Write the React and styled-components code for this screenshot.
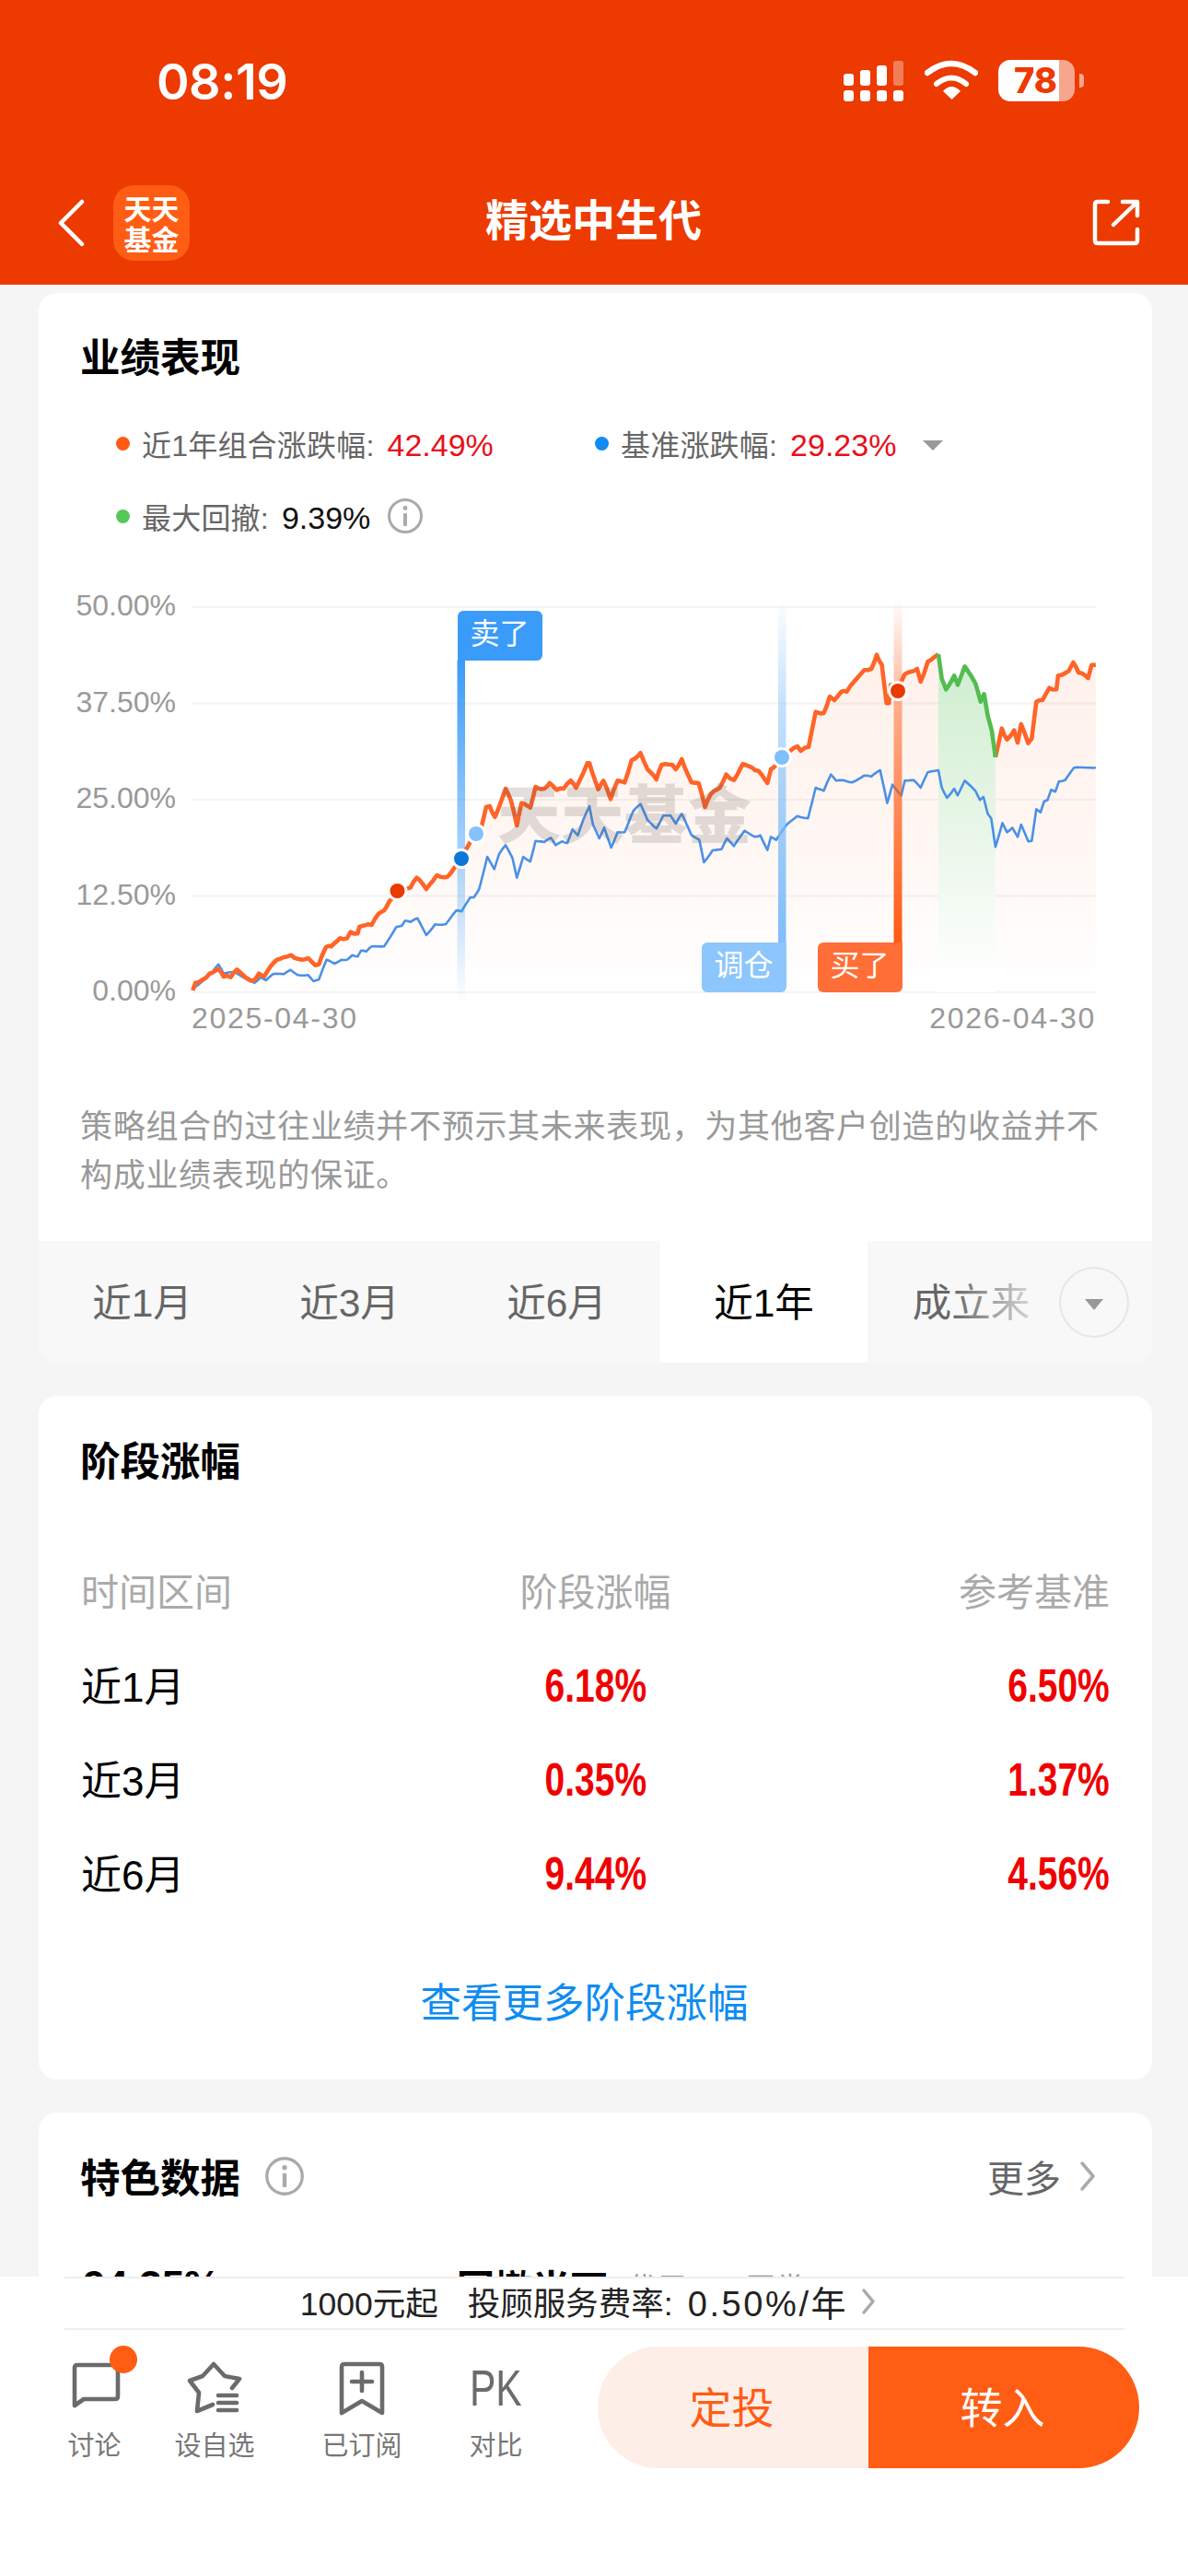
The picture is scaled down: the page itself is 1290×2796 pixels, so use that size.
import styled, { createGlobalStyle } from 'styled-components';

const GlobalStyle = createGlobalStyle`
  html, body {
    margin: 0;
    background: #fff;
  }
  * { box-sizing: border-box; }
  body {
    font-family: "Liberation Sans", "Noto Sans CJK SC", sans-serif;
  }
`;

const Page = styled.div`
  width: 1290px;
  height: 2796px;
  overflow: hidden;
  display: flex;
  flex-direction: column;
  background: #f5f5f5;
`;

/* header */
const Header = styled.header`
  height: 309px;
  flex: none;
  background: #ec3a00;
  padding-top: 58px;
  color: #fff;
`;

const StatusRow = styled.div`
  height: 60px;
  display: flex;
  align-items: center;
  padding-left: 170px;
`;

const Clock = styled.div`
  font-family: Inter, "Liberation Sans", sans-serif;
  font-weight: 600;
  font-size: 54px;
  letter-spacing: -0.5px;
  width: 746px;
`;

const Signal = styled.div`
  width: 65px;
  height: 48px;
  margin-top: -4px;
  display: grid;
  grid-template-columns: repeat(4, 11px);
  grid-template-rows: 31px 12px;
  column-gap: 7px;
  row-gap: 5px;
`;

const SignalBar = styled.span`
  border-radius: 3px;
  background: ${(p) => (p.$dim ? 'rgba(255,255,255,.35)' : '#fff')};
  align-self: end;
  height: ${(p) => p.$h}px;
`;

const WifiIcon = styled.svg`
  width: 58px;
  height: 44px;
  margin-left: 23px;
  margin-top: -2px;
`;

const Battery = styled.div`
  width: 83px;
  height: 45px;
  margin-left: 22px;
  margin-top: -2px;
  border-radius: 13px;
  background: linear-gradient(90deg, #fff 0, #fff 66px, rgba(255,255,255,.55) 66px);
  color: #ec3a00;
  font-family: Inter, "Liberation Sans", sans-serif;
  font-weight: 800;
  font-size: 38px;
  line-height: 45px;
  padding-left: 17px;
  position: relative;
  &::after {
    content: '';
    position: absolute;
    right: -10px;
    top: 15px;
    width: 5px;
    height: 15px;
    border-radius: 0 4px 4px 0;
    background: rgba(255,255,255,.55);
  }
`;

const NavRow = styled.div`
  margin-top: 83px;
  height: 82px;
  display: grid;
  grid-template-columns: 1fr auto 1fr;
  align-items: center;
  padding: 0 52px 0 63px;
`;

const NavLeft = styled.div`
  display: flex;
  align-items: center;
  gap: 30px;
`;

const LogoBox = styled.div`
  width: 83px;
  height: 82px;
  border-radius: 22px;
  background: #ff5c14;
  display: flex;
  flex-direction: column;
  align-items: center;
  justify-content: center;
  font-family: "Noto Sans CJK SC", sans-serif;
  font-weight: 700;
  font-size: 30px;
  line-height: 33px;
`;

const NavTitle = styled.div`
  font-family: "Noto Sans CJK SC", sans-serif;
  font-weight: 700;
  font-size: 47px;
  margin: -14px 12px 0 0;
`;

const ShareIcon = styled.svg`
  width: 52px;
  height: 52px;
  justify-self: end;
`;

/* main scroll area */
const Main = styled.main`
  height: 2162px;
  flex: none;
  overflow: hidden;
  padding: 9px 39px 0 42px;
`;

const Card = styled.section`
  background: #fff;
  border-radius: 20px;
  margin-bottom: 36px;
  overflow: hidden;
`;

const CardBody = styled.div`
  padding: ${(p) => p.$top}px 48px ${(p) => p.$bottom || 0}px;
`;

const CardTitle = styled.h2`
  margin: 0 0 0 -3px;
  font-family: "Noto Sans CJK SC", sans-serif;
  font-weight: 700;
  font-size: 43.5px;
  line-height: 60px;
  color: #000;
`;

const LegendRow = styled.div`
  display: flex;
  align-items: center;
  height: 60px;
  margin-left: 36px;
  margin-top: ${(p) => p.$top}px;
`;

const LegendItem = styled.div`
  display: flex;
  align-items: center;
  gap: 13px;
  width: ${(p) => (p.$w ? `${p.$w}px` : 'auto')};
  font-size: 32px;
  letter-spacing: 0.2px;
  color: #666;
`;

const LegendDot = styled.span`
  width: 15px;
  height: 15px;
  border-radius: 50%;
  background: ${(p) => p.$color};
`;

const LegendValue = styled.span`
  font-size: 34px;
  letter-spacing: 0;
  color: ${(p) => p.$color};
  margin-left: 14px;
`;

const Caret = styled.span`
  width: 0;
  height: 0;
  margin-left: 29px;
  margin-top: 4px;
  border-left: 11px solid transparent;
  border-right: 11px solid transparent;
  border-top: 11px solid #999;
`;

const InfoIcon = styled.svg`
  width: ${(p) => p.$size}px;
  height: ${(p) => p.$size}px;
  margin-left: ${(p) => p.$left}px;
`;

/* chart */
const Chart = styled.div`
  margin: 49px 0 0 -6px;
`;

const ChartRow = styled.div`
  display: flex;
  gap: 17px;
  height: 448px;
`;

const YAxis = styled.div`
  width: 107px;
  height: 458px;
  margin-top: -2px;
  flex: none;
  display: flex;
  flex-direction: column;
  justify-content: space-between;
  align-items: flex-end;
  font-size: 32px;
  line-height: 40px;
  color: #999;
`;

const Plot = styled.div`
  position: relative;
  width: 982px;
  height: 448px;
`;

const PlotSvg = styled.svg`
  display: block;
  overflow: visible;
`;

const Watermark = styled.div`
  position: absolute;
  left: 332px;
  top: 196px;
  font-family: "Noto Sans CJK SC", sans-serif;
  font-weight: 900;
  font-size: 69px;
  line-height: 90px;
  color: rgba(90, 85, 80, 0.18);
  white-space: nowrap;
`;

const Tag = styled.div`
  position: absolute;
  left: ${(p) => p.$x}px;
  top: ${(p) => p.$y}px;
  width: 92px;
  height: 54px;
  background: ${(p) => p.$color};
  border-radius: ${(p) => (p.$up ? '6px 6px 6px 0' : '6px 0 6px 6px')};
  color: #fff;
  font-size: 32px;
  line-height: 50px;
  text-align: center;
`;

const DateRow = styled.div`
  margin: -2px 0 0 124px;
  width: 982px;
  display: flex;
  justify-content: space-between;
  font-size: 32px;
  line-height: 40px;
  letter-spacing: 1.7px;
  color: #999;
`;

const Disclaimer = styled.p`
  margin: 71px 0 0 -3px;
  width: 1125px;
  font-size: 35px;
  letter-spacing: 0.7px;
  line-height: 53px;
  color: #999;
`;

const TabBar = styled.div`
  position: relative;
  display: flex;
  height: 132px;
  background: #f8f8f8;
  overflow: hidden;
`;

const Tab = styled.div`
  width: 225px;
  flex: none;
  display: flex;
  align-items: center;
  justify-content: center;
  padding-bottom: 6px;
  font-size: 42.5px;
  color: ${(p) => (p.$active ? '#000' : '#666')};
  background: ${(p) => (p.$active ? '#fff' : 'transparent')};
`;

const TabFade = styled.div`
  position: absolute;
  left: 990px;
  top: 0;
  bottom: 0;
  width: 219px;
  background: linear-gradient(90deg, rgba(248,248,248,0) 0, #f8f8f8 115px);
`;

const TabMore = styled.div`
  position: absolute;
  left: 1108px;
  top: 28px;
  width: 76px;
  height: 77px;
  border-radius: 50%;
  border: 2px solid #e6e6e6;
  display: flex;
  align-items: center;
  justify-content: center;
  &::after {
    content: '';
    margin-top: 5px;
    border-left: 10px solid transparent;
    border-right: 10px solid transparent;
    border-top: 12px solid #999;
  }
`;

/* period table */
const Table = styled.div`
  margin: 83px -2px 0;
  display: grid;
  grid-template-columns: 1fr auto 1fr;
`;

const Cell = styled.div`
  display: flex;
  align-items: center;
  justify-content: ${(p) => p.$align};
  min-width: 0;
`;

const HeadCell = styled(Cell)`
  height: 60px;
  margin-bottom: 22px;
  padding-bottom: 5px;
  font-size: 41px;
  color: #aaa;
`;

const LabelCell = styled(Cell)`
  height: 102px;
  padding-bottom: 5px;
  font-size: 44px;
  color: #000;
`;

const ValueCell = styled(Cell)`
  height: 102px;
  color: #f00000;
`;

const ValueText = styled.span`
  display: inline-block;
  font-weight: 700;
  font-size: 50px;
  transform: scaleX(0.78);
  transform-origin: ${(p) => (p.$end ? 'right center' : 'center')};
`;

const MoreLink = styled.div`
  margin-top: 60px;
  padding-right: 24px;
  text-align: center;
  font-size: 44.5px;
  line-height: 60px;
  color: #0f8cf0;
`;

/* feature data */
const TitleRow = styled.div`
  display: flex;
  align-items: center;
`;

const MoreText = styled.div`
  margin-left: auto;
  font-size: 40px;
  color: #666;
`;

const Chevron = styled.svg`
  width: ${(p) => p.$w}px;
  height: ${(p) => p.$h}px;
  margin-left: ${(p) => p.$left}px;
  margin-right: ${(p) => p.$right || 0}px;
`;

const DataRow = styled.div`
  margin-top: 59px;
  display: flex;
  align-items: center;
  height: 60px;
`;

const DataValue = styled.div`
  width: 406px;
  font-weight: 700;
  font-size: 44px;
  color: #000;
`;

const DataName = styled.div`
  font-family: "Noto Sans CJK SC", sans-serif;
  font-weight: 700;
  font-size: 41px;
  color: #000;
`;

const DataNote = styled.div`
  margin-left: 22px;
  font-size: 32px;
  color: #999;
`;

/* footer */
const Footer = styled.footer`
  flex: 1;
  background: #fff;
`;

const FeeRow = styled.div`
  margin: 0 69px 0 70px;
  height: 58px;
  padding: 0 14px 5px 0;
  border-top: 2px solid #eeeeee;
  border-bottom: 2px solid #eeeeee;
  display: flex;
  align-items: center;
  justify-content: center;
  font-size: 35.5px;
  color: #222;
`;

const FeeGap = styled.span`
  width: 32px;
`;

const FeeRate = styled.span`
  margin-left: 16px;
  font-size: 38px;
  letter-spacing: 2.6px;
`;

const ActionRow = styled.div`
  margin-top: 18px;
  display: flex;
  align-items: flex-start;
  padding-left: 74px;
`;

const ActionItem = styled.div`
  position: relative;
  display: flex;
  flex-direction: column;
  align-items: center;
  width: ${(p) => p.$w}px;
  margin-right: ${(p) => p.$gap}px;
  padding-top: 14px;
  height: 132px;
  color: #6b6b6b;
`;

const ActionIcon = styled.svg`
  width: ${(p) => p.$w}px;
  height: 62px;
  flex: none;
  overflow: visible;
`;

const PkMark = styled.div`
  height: 62px;
  font-size: 56px;
  line-height: 62px;
  color: #6b6b6b;
  transform: scaleX(0.76);
`;

const ActionLabel = styled.div`
  margin-top: 12px;
  font-size: 29px;
  line-height: 40px;
  white-space: nowrap;
  color: #777;
`;

const Badge = styled.span`
  position: absolute;
  left: 45px;
  top: -1px;
  width: 30px;
  height: 30px;
  border-radius: 50%;
  background: #ff5c14;
`;

const BuyButtons = styled.div`
  display: flex;
  margin-left: 82px;
  width: 588px;
  height: 132px;
  border-radius: 66px;
  overflow: hidden;
  font-size: 46px;
`;

const BuyButton = styled.div`
  flex: 1;
  display: flex;
  align-items: center;
  justify-content: center;
  padding: 0 3px 6px 0;
  background: ${(p) => (p.$solid ? '#ff5c14' : '#fdeee8')};
  color: ${(p) => (p.$solid ? '#fff' : '#ff5c14')};
`;

/* chart data, read off the picture */
const mapLeft = ([x, y]) => [40 + x / 2.613 - 208, y / 3 - 19];
const mapRight = ([x, y]) => [640 + x / 2.613 - 208, y / 3 - 19];

const orangeLeft = [[442,1365],[450,1340],[470,1330],[490,1310],[515,1295],[530,1320],[550,1322],[568,1297],[590,1320],[615,1333],[630,1310],[645,1320],[672,1275],[690,1262],[722,1250],[740,1262],[770,1260],[790,1283],[800,1280],[820,1225],[835,1222],[860,1195],[880,1195],[890,1175],[910,1180],[915,1158],[950,1152],[970,1115],[985,1105],[1000,1075],[1020,1045],[1060,1030],[1078,998],[1105,1035],[1135,990],[1165,995],[1185,965],[1205,935],[1245,855],[1262,830],[1275,768],[1285,765],[1300,800],[1330,708],[1345,745],[1362,828],[1375,755],[1400,770],[1415,702],[1440,708],[1455,690],[1475,712],[1495,708],[1515,682],[1530,705],[1562,625]];
const orangeMid = [[0,625],[25,710],[40,682],[60,742],[80,682],[100,688],[120,615],[145,592],[165,645],[190,678],[205,630],[235,630],[245,645],[262,612],[290,688],[310,690],[328,768],[345,725],[370,705],[388,662],[410,680],[435,628],[470,648],[480,650],[505,690],[515,645],[548,605],[570,585],[590,570],[600,585],[622,572],[642,458],[665,462],[682,408],[695,420],[715,392],[730,392],[780,322],[800,318],[815,272],[830,305],[843,430],[850,430],[855,370],[875,390],[895,335],[930,318],[940,360],[960,295],[990,270]];
const greenPart = [[990,270],[1000,350],[1012,385],[1035,340],[1045,370],[1065,310],[1095,365],[1110,425],[1120,400],[1130,470],[1142,520],[1152,605]];
const orangeEnd = [[1152,605],[1170,512],[1185,548],[1205,518],[1215,558],[1225,498],[1245,560],[1255,545],[1268,425],[1285,420],[1305,380],[1325,385],[1330,340],[1360,325],[1373,297],[1388,330],[1415,348],[1425,305],[1437,305]];
const blueLeft = [[442,1360],[470,1335],[490,1315],[515,1280],[530,1310],[560,1305],[590,1325],[618,1340],[635,1322],[650,1332],[670,1312],[700,1312],[720,1298],[740,1315],[770,1315],[785,1335],[800,1330],[822,1265],[845,1278],[865,1265],[880,1265],[895,1250],[910,1255],[920,1235],[935,1238],[950,1222],[985,1222],[1020,1158],[1035,1155],[1045,1138],[1060,1142],[1080,1130],[1105,1185],[1130,1150],[1160,1150],[1190,1105],[1205,1108],[1230,1062],[1240,1062],[1255,1035],[1278,930],[1298,970],[1312,920],[1330,892],[1350,935],[1362,998],[1380,930],[1400,945],[1415,878],[1440,882],[1458,868],[1472,892],[1490,880],[1505,885],[1520,840],[1535,860],[1550,810],[1568,765]];
const blueRight = [[0,765],[10,825],[28,870],[42,835],[62,900],[80,850],[100,850],[125,780],[145,758],[165,810],[190,838],[210,795],[230,795],[245,822],[262,790],[290,860],[312,875],[325,948],[350,908],[375,905],[390,870],[410,895],[440,845],[470,865],[485,860],[505,908],[515,865],[530,875],[560,825],[590,797],[620,805],[642,705],[665,715],[685,662],[700,682],[720,680],[745,688],[780,665],[800,668],[825,648],[845,755],[860,695],[885,730],[895,682],[920,680],[940,705],[960,655],[990,648],[1000,705],[1015,738],[1035,708],[1045,730],[1065,682],[1095,715],[1108,745],[1118,735],[1130,790],[1140,805],[1152,898],[1172,820],[1185,850],[1200,835],[1215,865],[1225,825],[1245,880],[1255,878],[1268,775],[1280,785],[1290,750],[1300,745],[1310,712],[1322,718],[1332,685],[1350,680],[1375,640],[1437,640]];

// breaks a segment list into short steps so the line looks like daily data
const roughen = (points, amount) => {
  const out = [];
  points.forEach((pt, i) => {
    if (i === 0) {
      out.push(pt);
      return;
    }
    const prev = points[i - 1];
    const steps = Math.max(1, Math.round((pt[0] - prev[0]) / 3.5));
    for (let s = 1; s <= steps; s++) {
      const t = s / steps;
      const wobble = s === steps ? 0 : Math.sin(out.length * 12.9898) * amount;
      out.push([prev[0] + (pt[0] - prev[0]) * t, prev[1] + (pt[1] - prev[1]) * t + wobble]);
    }
  });
  return out;
};

const toLine = (pts) => pts.map((p) => `${p[0].toFixed(1)},${p[1].toFixed(1)}`).join(' ');

const orangeA = roughen([...orangeLeft.map(mapLeft), ...orangeMid.map(mapRight)], 1.2);
const greenLine = roughen(greenPart.map(mapRight), 0.8);
const orangeB = roughen(orangeEnd.map(mapRight), 1.2);
const blueLine = roughen([...blueLeft.map(mapLeft), ...blueRight.map(mapRight)], 0.4);

const BASE_Y = 438;
const areaPoints = toLine([...orangeA, ...greenLine, ...orangeB, [982, BASE_Y], [0, BASE_Y]]);
const greenEndX = greenLine[greenLine.length - 1][0];
const greenArea = toLine([...greenLine, [greenEndX, BASE_Y], [greenLine[0][0], BASE_Y]]);

const gridLines = [20, 124.5, 229, 333.5, 438];
const yLabels = ['50.00%', '37.50%', '25.00%', '12.50%', '0.00%'];

const markers = [
  { x: 223.5, y: 328, color: '#e93a00' },
  { x: 293, y: 293, color: '#0a78d8' },
  { x: 309, y: 266, color: '#85c2fb' },
  { x: 641, y: 183, color: '#7fc0fb' },
  { x: 767, y: 111, color: '#e93a00' },
];

const periods = [
  ['近1月', '6.18%', '6.50%'],
  ['近3月', '0.35%', '1.37%'],
  ['近6月', '9.44%', '4.56%'],
];

const tabs = ['近1月', '近3月', '近6月', '近1年', '成立来'];

function Info({ size, left }) {
  return (
    <InfoIcon $size={size} $left={left} viewBox="0 0 40 40">
      <circle cx="20" cy="20" r="17.5" fill="none" stroke="#aaa" strokeWidth="3" />
      <circle cx="20" cy="11.5" r="2.4" fill="#aaa" />
      <rect x="18" y="17" width="4" height="14" rx="1" fill="#aaa" />
    </InfoIcon>
  );
}

function PerformanceChart() {
  return (
    <Chart>
      <ChartRow>
        <YAxis>
          {yLabels.map((label) => (
            <span key={label}>{label}</span>
          ))}
        </YAxis>
        <Plot>
          <PlotSvg width="982" height="448" viewBox="0 0 982 448">
            <defs>
              <linearGradient id="areaFill" gradientUnits="userSpaceOnUse" x1="0" y1="60" x2="0" y2="440">
                <stop offset="0" stopColor="#ff5a14" stopOpacity="0.09" />
                <stop offset="0.55" stopColor="#ff5a14" stopOpacity="0.05" />
                <stop offset="1" stopColor="#ff5a14" stopOpacity="0" />
              </linearGradient>
              <linearGradient id="greenFill" gradientUnits="userSpaceOnUse" x1="0" y1="70" x2="0" y2="428">
                <stop offset="0" stopColor="#52bd4f" stopOpacity="0.28" />
                <stop offset="1" stopColor="#52bd4f" stopOpacity="0" />
              </linearGradient>
              <linearGradient id="sellBand" x1="0" y1="0" x2="0" y2="1">
                <stop offset="0" stopColor="#3a9bf8" />
                <stop offset="1" stopColor="#3a9bf8" stopOpacity="0" />
              </linearGradient>
              <linearGradient id="swapBand" x1="0" y1="0" x2="0" y2="1">
                <stop offset="0" stopColor="#7fbdfc" stopOpacity="0" />
                <stop offset="0.3" stopColor="#7fbdfc" stopOpacity="0.45" />
                <stop offset="1" stopColor="#7fbdfc" />
              </linearGradient>
              <linearGradient id="buyBand" x1="0" y1="0" x2="0" y2="1">
                <stop offset="0" stopColor="#ff5a14" stopOpacity="0" />
                <stop offset="0.3" stopColor="#ff5a14" stopOpacity="0.45" />
                <stop offset="1" stopColor="#ff5a14" />
              </linearGradient>
            </defs>
            {gridLines.map((y) => (
              <line key={y} x1="0" x2="982" y1={y} y2={y} stroke="#f4f4f4" strokeWidth="2" />
            ))}
            <polygon points={areaPoints} fill="url(#areaFill)" />
            <polygon points={greenArea} fill="#fff" />
            <polygon points={greenArea} fill="url(#greenFill)" />
            <polyline points={toLine(blueLine)} fill="none" stroke="#4a90e8" strokeWidth="2.6" strokeLinejoin="round" />
            <polyline points={toLine(orangeA)} fill="none" stroke="#ff6428" strokeWidth="4.6" strokeLinejoin="round" />
            <polyline points={toLine(orangeB)} fill="none" stroke="#ff6428" strokeWidth="4.6" strokeLinejoin="round" />
            <polyline points={toLine(greenLine)} fill="none" stroke="#52bd4f" strokeWidth="4.6" strokeLinejoin="round" />
            <rect x="288.5" y="78" width="8.5" height="373" fill="url(#sellBand)" />
            <rect x="637" y="11" width="8.5" height="373" fill="url(#swapBand)" />
            <rect x="762.5" y="11" width="9" height="373" fill="url(#buyBand)" />
            {markers.map((m) => (
              <g key={m.x}>
                <circle cx={m.x} cy={m.y} r="11" fill="#fff" />
                <circle cx={m.x} cy={m.y} r="8" fill={m.color} />
              </g>
            ))}
          </PlotSvg>
          <Watermark>天天基金</Watermark>
          <Tag $x={288.5} $y={24} $up $color="#3a9bf8">卖了</Tag>
          <Tag $x={553.5} $y={384} $color="#8cc6fc">调仓</Tag>
          <Tag $x={679.5} $y={384} $color="#ff6e37">买了</Tag>
        </Plot>
      </ChartRow>
      <DateRow>
        <span>2025-04-30</span>
        <span>2026-04-30</span>
      </DateRow>
    </Chart>
  );
}

function App() {
  return (
    <Page>
      <GlobalStyle />
      <Header>
        <StatusRow>
          <Clock>08:19</Clock>
          <Signal>
            <SignalBar $h={13} />
            <SignalBar $h={17} />
            <SignalBar $h={22} />
            <SignalBar $h={27} $dim />
            <SignalBar $h={12} />
            <SignalBar $h={12} />
            <SignalBar $h={12} />
            <SignalBar $h={12} />
          </Signal>
          <WifiIcon viewBox="0 0 58 44">
            <path d="M3 14 Q29 -6 55 14" fill="none" stroke="#fff" strokeWidth="6.5" strokeLinecap="round" />
            <path d="M13 26 Q29 13 45 26" fill="none" stroke="#fff" strokeWidth="6" strokeLinecap="round" />
            <path d="M20 34 Q29 24 39 34 L29.5 43 Z" fill="#fff" />
          </WifiIcon>
          <Battery>78</Battery>
        </StatusRow>
        <NavRow>
          <NavLeft>
            <svg width="30" height="52" viewBox="0 0 30 52">
              <polyline points="26,3 3,26 26,49" fill="none" stroke="#fff" strokeWidth="4.5" strokeLinecap="round" strokeLinejoin="round" />
            </svg>
            <LogoBox>
              <span>天天</span>
              <span>基金</span>
            </LogoBox>
          </NavLeft>
          <NavTitle>精选中生代</NavTitle>
          <ShareIcon viewBox="0 0 52 52">
            <path d="M17 3 H6 Q3 3 3 6 V45 Q3 48 6 48 H46 Q49 48 49 45 V33" fill="none" stroke="#fff" strokeWidth="4.5" strokeLinecap="round" />
            <path d="M23 28 L48 4 M33 3 H49 V18" fill="none" stroke="#fff" strokeWidth="4.5" strokeLinecap="round" strokeLinejoin="round" />
          </ShareIcon>
        </NavRow>
      </Header>

      <Main>
        <Card>
          <CardBody $top={38} $bottom={45}>
            <CardTitle>业绩表现</CardTitle>
            <LegendRow $top={35}>
              <LegendItem $w={520}>
                <LegendDot $color="#ff5a14" />
                <span>
                  近1年组合涨跌幅:<LegendValue $color="#e8101c">42.49%</LegendValue>
                </span>
              </LegendItem>
              <LegendItem>
                <LegendDot $color="#0f8cf5" />
                <span>
                  基准涨跌幅:<LegendValue $color="#e8101c">29.23%</LegendValue>
                </span>
              </LegendItem>
              <Caret />
            </LegendRow>
            <LegendRow $top={19}>
              <LegendItem>
                <LegendDot $color="#55c85a" />
                <span>
                  最大回撤:<LegendValue $color="#111">9.39%</LegendValue>
                </span>
              </LegendItem>
              <Info size={40} left={18} />
            </LegendRow>
            <PerformanceChart />
            <Disclaimer>策略组合的过往业绩并不预示其未来表现，为其他客户创造的收益并不构成业绩表现的保证。</Disclaimer>
          </CardBody>
          <TabBar>
            {tabs.map((tab) => (
              <Tab key={tab} $active={tab === '近1年'}>{tab}</Tab>
            ))}
            <TabFade />
            <TabMore />
          </TabBar>
        </Card>

        <Card>
          <CardBody $top={39} $bottom={52}>
            <CardTitle>阶段涨幅</CardTitle>
            <Table>
              <HeadCell $align="flex-start">时间区间</HeadCell>
              <HeadCell $align="center">阶段涨幅</HeadCell>
              <HeadCell $align="flex-end">参考基准</HeadCell>
              {periods.map(([label, own, base]) => [
                <LabelCell key={label} $align="flex-start">{label}</LabelCell>,
                <ValueCell key={`${label}-own`} $align="center"><ValueText>{own}</ValueText></ValueCell>,
                <ValueCell key={`${label}-base`} $align="flex-end"><ValueText $end>{base}</ValueText></ValueCell>,
              ])}
            </Table>
            <MoreLink>查看更多阶段涨幅</MoreLink>
          </CardBody>
        </Card>

        <Card>
          <CardBody $top={39}>
            <TitleRow>
              <CardTitle>特色数据</CardTitle>
              <Info size={44} left={26} />
              <MoreText>更多</MoreText>
              <Chevron $w={18} $h={34} $left={20} $right={13} viewBox="0 0 18 34">
                <polyline points="3,3 15,17 3,31" fill="none" stroke="#aaa" strokeWidth="3.5" strokeLinecap="round" strokeLinejoin="round" />
              </Chevron>
            </TitleRow>
            <DataRow>
              <DataValue>94.35%</DataValue>
              <DataName>回撤当下</DataName>
              <DataNote>优于91%同类</DataNote>
            </DataRow>
          </CardBody>
        </Card>
      </Main>

      <Footer>
        <FeeRow>
          <span>1000元起</span>
          <FeeGap />
          <span>投顾服务费率:</span>
          <FeeRate>0.50%/年</FeeRate>
          <Chevron $w={16} $h={30} $left={14} viewBox="0 0 16 30">
            <polyline points="3,3 13,15 3,27" fill="none" stroke="#aaa" strokeWidth="3.5" strokeLinecap="round" strokeLinejoin="round" />
          </Chevron>
        </FeeRow>
        <ActionRow>
          <ActionItem $w={57} $gap={59}>
            <ActionIcon $w={54} viewBox="0 0 54 62">
              <path d="M5 50 V9 Q5 6 8 6 H49 Q52 6 52 9 V40 Q52 43 49 43 H15 Z" fill="none" stroke="#6b6b6b" strokeWidth="4.6" strokeLinejoin="round" />
            </ActionIcon>
            <Badge />
            <ActionLabel>讨论</ActionLabel>
          </ActionItem>
          <ActionItem $w={86} $gap={74}>
            <ActionIcon $w={58} viewBox="0 0 58 62">
              <path d="M48 31 L56 21 L40 18 L28 5 L16 18 L2 23 L12 36 L10 56 L27 49" fill="none" stroke="#6b6b6b" strokeWidth="4.6" strokeLinecap="round" strokeLinejoin="round" />
              <path d="M33 39 H53 M33 47 H53 M33 55 H53" fill="none" stroke="#6b6b6b" strokeWidth="4.6" strokeLinecap="round" />
            </ActionIcon>
            <ActionLabel>设自选</ActionLabel>
          </ActionItem>
          <ActionItem $w={86} $gap={74}>
            <ActionIcon $w={50} viewBox="0 0 50 62">
              <path d="M3 8 Q3 5 6 5 H44 Q47 5 47 8 V58 L25 45 L3 58 Z" fill="none" stroke="#6b6b6b" strokeWidth="4.6" strokeLinejoin="round" />
              <path d="M14 24 H36 M25 14 V34" fill="none" stroke="#6b6b6b" strokeWidth="4.6" strokeLinecap="round" />
            </ActionIcon>
            <ActionLabel>已订阅</ActionLabel>
          </ActionItem>
          <ActionItem $w={57} $gap={0}>
            <PkMark>PK</PkMark>
            <ActionLabel>对比</ActionLabel>
          </ActionItem>
          <BuyButtons>
            <BuyButton>定投</BuyButton>
            <BuyButton $solid>转入</BuyButton>
          </BuyButtons>
        </ActionRow>
      </Footer>
    </Page>
  );
}

export default App;
